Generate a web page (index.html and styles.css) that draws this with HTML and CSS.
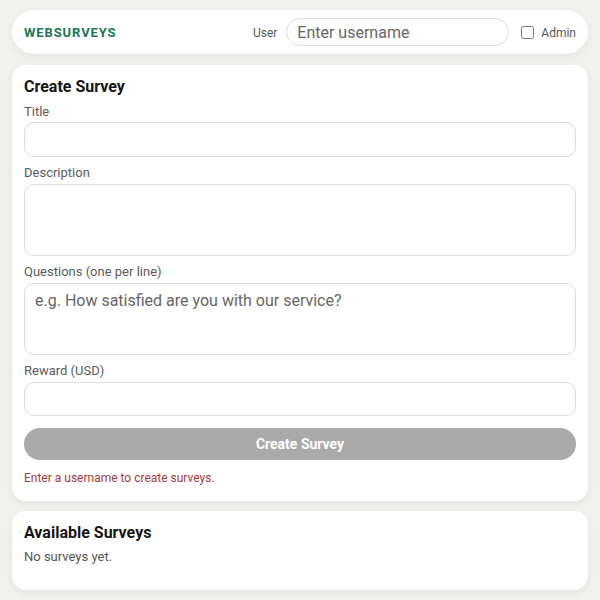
FILE: index.html
```html
<!DOCTYPE html>
<html>
<head>
<meta charset="utf-8">
<link rel="stylesheet" href="styles.css">
</head>
<body>
<header class="topbar">
  <div class="brand">WEBSURVEYS</div>
  <div class="user-area">
    <label class="user-label" for="username">User</label>
    <input id="username" class="user-input" type="text" placeholder="Enter username">
    <label class="admin"><input type="checkbox" class="admin-check"> Admin</label>
  </div>
</header>

<section class="card create">
  <h2 class="card-title">Create Survey</h2>
  <label class="field-label first">Title</label>
  <input class="field input" type="text">
  <label class="field-label">Description</label>
  <textarea class="field area"></textarea>
  <label class="field-label">Questions (one per line)</label>
  <textarea class="field area" placeholder="e.g. How satisfied are you with our service?"></textarea>
  <label class="field-label">Reward (USD)</label>
  <input class="field input reward" type="text">
  <button class="submit" disabled>Create Survey</button>
  <p class="error">Enter a username to create surveys.</p>
</section>

<section class="card list">
  <h2 class="card-title">Available Surveys</h2>
  <p class="empty">No surveys yet.</p>
</section>
</body>
</html>
```

FILE: styles.css
```css
* { box-sizing: border-box; }
html, body { margin: 0; padding: 0; }
body {
  background: #f1f1ed;
  font-family: Roboto, "Liberation Sans", sans-serif;
  color: #222;
  padding: 10px 12px;
}
.topbar {
  background: #fff;
  border-radius: 22px;
  height: 44px;
  display: flex;
  align-items: center;
  justify-content: space-between;
  padding: 0 12px;
  box-shadow: 0 3px 8px rgba(0,0,0,0.06);
}
.brand {
  color: #1b7653;
  font-weight: 700;
  font-size: 13px;
  letter-spacing: 0.9px;
  padding-top: 1px;
}
.user-area {
  display: flex;
  align-items: center;
}
.user-label {
  font-size: 12px;
  color: #555;
  margin-right: 9px;
  padding-top: 1px;
}
.user-input {
  width: 223px;
  height: 28px;
  border: 1px solid #dcdcdc;
  border-radius: 14px;
  padding: 0 10px;
  font-family: inherit;
  font-size: 16px;
  color: #333;
  outline: none;
}
.user-input::placeholder { color: #666; }
.admin {
  display: flex;
  align-items: center;
  font-size: 12px;
  color: #555;
  margin-left: 12px;
  padding-top: 1px;
}
.admin-check {
  margin: 0 7px 0 0;
  width: 13px;
  height: 13px;
}
.card {
  background: #fff;
  border-radius: 14px;
  box-shadow: 0 3px 8px rgba(0,0,0,0.06);
  padding: 12px 12px 15px;
  margin-top: 11px;
}
.card.list {
  margin-top: 10px;
  padding-bottom: 25px;
}
.card-title {
  margin: 0;
  font-size: 16px;
  line-height: 20px;
  font-weight: 700;
  color: #151515;
}
.field-label {
  display: block;
  font-size: 13px;
  line-height: 16px;
  color: #5a5a5a;
  margin-top: 8px;
  margin-bottom: 3px;
}
.field-label.first { margin-top: 7px; margin-bottom: 2px; }
.field {
  display: block;
  width: 100%;
  border: 1px solid #dcdcdc;
  border-radius: 10px;
  font-family: inherit;
  font-size: 16px;
  color: #333;
  background: #fff;
  outline: none;
}
.input { height: 35px; padding: 0 10px; }
.reward { height: 34px; }
.area {
  height: 72px;
  padding: 7px 10px;
  resize: none;
  line-height: 20px;
}
.area::placeholder { color: #666; }
.submit {
  display: block;
  width: 100%;
  height: 32px;
  margin-top: 12px;
  border: none;
  border-radius: 16px;
  background: #aaaaaa;
  color: #fff;
  font-family: inherit;
  font-weight: 700;
  font-size: 14px;
}
.error {
  margin: 10px 0 0;
  font-size: 12px;
  line-height: 16px;
  color: #a33a3a;
}
.empty {
  margin: 6px 0 0;
  font-size: 13px;
  line-height: 16px;
  color: #555;
}
```
